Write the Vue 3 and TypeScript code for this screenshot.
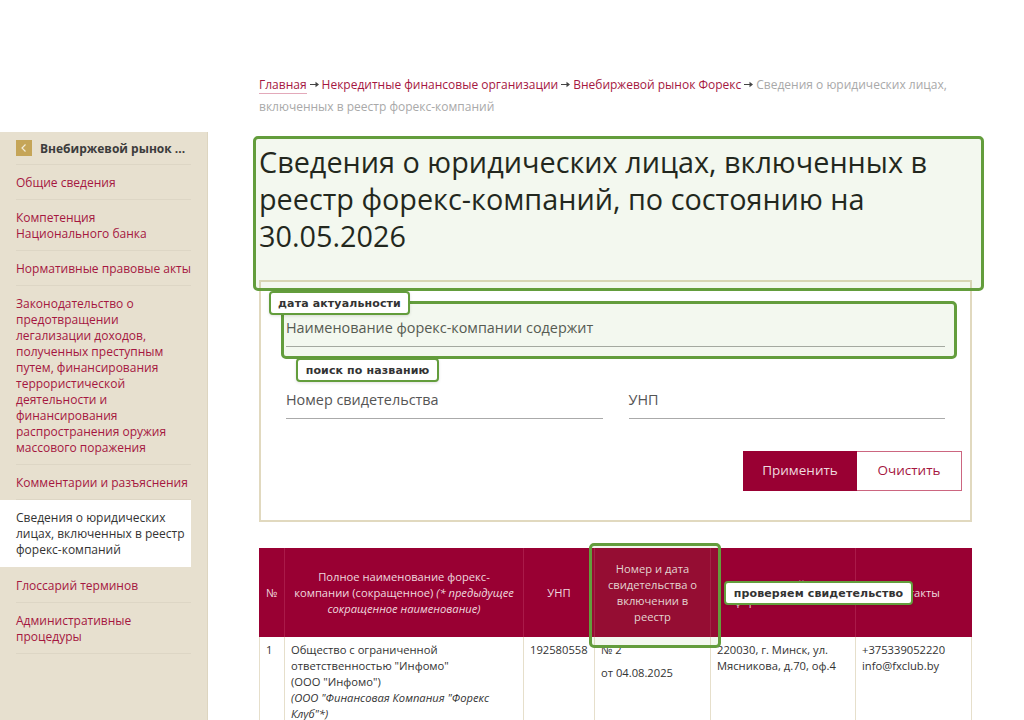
<script setup lang="ts">
interface NavItem { label: string; active?: boolean }
const nav: NavItem[] = [
  { label: 'Общие сведения' },
  { label: 'Компетенция Национального банка' },
  { label: 'Нормативные правовые акты' },
  { label: 'Законодательство о предотвращении легализации доходов, полученных преступным путем, финансирования террористической деятельности и финансирования распространения оружия массового поражения' },
  { label: 'Комментарии и разъяснения' },
  { label: 'Сведения о юридических лицах, включенных в реестр форекс-компаний', active: true },
  { label: 'Глоссарий терминов' },
  { label: 'Административные процедуры' },
]
const crumbs: string[] = ['Главная', 'Некредитные финансовые организации', 'Внебиржевой рынок Форекс']
</script>

<template>
  <div class="page">
    <aside class="side">
      <div class="side-head">
        <span class="back">
          <svg width="16" height="16" viewBox="0 0 16 16"><path d="M9.5 4.5 6 8l3.5 3.5" fill="none" stroke="#f3ecd8" stroke-width="1.2" /></svg>
        </span>
        <span class="side-title">Внебиржевой рынок ...</span>
      </div>
      <a v-for="n in nav" :key="n.label" class="nav" :class="{ active: n.active }">{{ n.label }}</a>
    </aside>

    <main class="main">
      <nav class="crumbs">
        <template v-for="(c, i) in crumbs" :key="c">
          <a :class="{ first: i === 0 }">{{ c }}</a>
          <svg class="arr" width="9" height="7" viewBox="0 0 9 7"><path d="M0 3h5.5V.8L9 3.5 5.5 6.2V4H0z" fill="#444" /></svg>
        </template>
        <span class="cur">Сведения о юридических лицах, включенных в реестр форекс-компаний</span>
      </nav>

      <h1 class="title">Сведения о юридических лицах, включенных в реестр форекс-компаний, по состоянию на 30.05.2026</h1>

      <section class="filter">
        <div class="field wide">Наименование форекс-компании содержит</div>
        <div class="row">
          <div class="field">Номер свидетельства</div>
          <div class="field">УНП</div>
        </div>
        <div class="btns">
          <button class="btn primary">Применить</button>
          <button class="btn ghost">Очистить</button>
        </div>
      </section>

      <table class="tbl">
        <colgroup>
          <col class="c1" /><col class="c2" /><col class="c3" /><col class="c4" /><col class="c5" /><col class="c6" />
        </colgroup>
        <thead>
          <tr>
            <th>№</th>
            <th>Полное наименование форекс-компании (сокращенное) <i>(* предыдущее сокращенное наименование)</i></th>
            <th>УНП</th>
            <th>Номер и дата свидетельства о включении в реестр</th>
            <th>Юридический адрес форекс-компании</th>
            <th>Контакты</th>
          </tr>
        </thead>
        <tbody>
          <tr>
            <td>1</td>
            <td>Общество с ограниченной ответственностью "Инфомо"<br />(ООО "Инфомо")<br /><i>(ООО "Финансовая Компания "Форекс Клуб"*)</i></td>
            <td>192580558</td>
            <td><p class="cert">№ 2</p><p class="cert">от 04.08.2025</p></td>
            <td>220030, г. Минск, ул. Мясникова, д.70, оф.4</td>
            <td>+375339052220<br />info@fxclub.by</td>
          </tr>
        </tbody>
      </table>
    </main>

    <div class="hl hl-title"></div>
    <div class="hl hl-input"></div>
    <div class="hl hl-cert"></div>
    <div class="tag tag-date">дата актуальности</div>
    <div class="tag tag-search">поиск по названию</div>
    <div class="tag tag-cert">проверяем свидетельство</div>
  </div>
</template>

<style>
html, body { margin: 0; background: #fff; }
</style>

<style scoped>
.page {
  position: relative;
  display: flex;
  width: 1024px;
  height: 720px;
  overflow: hidden;
  font-family: "Open Sans", "Noto Sans", sans-serif;
  background: #fff;
  color: #333;
}
.side {
  box-sizing: border-box;
  width: 208px;
  height: 588px;
  margin-top: 132px;
  padding: 0 16px 0 16px;
  background: #e7e0cf;
  border-right: 1px solid #ddd5c0;
  display: flex;
  flex-direction: column;
  flex-shrink: 0;
}
.side-head {
  display: flex;
  align-items: center;
  gap: 8px;
  height: 33px;
  box-sizing: border-box;
  border-bottom: 1px solid #ddd6c5;
}
.back {
  width: 16px;
  height: 16px;
  background: #c5a558;
  display: flex;
}
.side-title { font-size: 12px; font-weight: 700; color: #3c3c3c; white-space: nowrap; }
.nav {
  padding: 10px 0 8px;
  font-size: 12px;
  line-height: 16px;
  color: #a5173f;
  border-bottom: 1px solid #ddd6c5;
}
.nav.active {
  margin-left: -16px;
  padding: 10px 0 9px 16px;
  background: #fff;
  color: #333;
  border-bottom: 0;
}
.nav.active + .nav { padding-top: 11px; }
.main {
  box-sizing: border-box;
  width: 713px;
  margin-left: 51px;
  padding-top: 74px;
  flex-shrink: 0;
}
.crumbs { font-size: 12px; line-height: 22px; color: #a9a9a9; }
.crumbs a { color: #a5173f; }
.crumbs a.first { border-bottom: 1px solid #e3a9ba; }
.arr { vertical-align: 1px; margin: 0 3px; }
.title {
  margin: 25px 0 0;
  font-size: 28.8px;
  line-height: 37px;
  height: 137px;
  font-weight: 400;
  color: #1d1d1d;
}
.filter {
  box-sizing: border-box;
  height: 242px;
  padding: 28px 8px 0 25px;
  border: 2px solid #e1d9bf;
}
.field {
  box-sizing: border-box;
  height: 37px;
  font-size: 14.4px;
  line-height: 36px;
  color: #555;
  border-bottom: 1px solid #aaa;
  flex: 1;
}
.field.wide { margin-right: 17px; }
.row { display: flex; gap: 26px; margin-top: 35px; margin-right: 17px; }
.btns { display: flex; justify-content: flex-end; margin-top: 32px; }
.btn {
  box-sizing: border-box;
  height: 40px;
  font: 400 13.5px "Open Sans", sans-serif;
  padding: 0 0 2px;
}
.primary { width: 114px; background: #990033; color: #eed9df; border: 0; }
.ghost { width: 105px; background: #fff; color: #a5173f; border: 1px solid #cc6680; border-left: 0; }
.tbl {
  margin-top: 26px;
  width: 713px;
  table-layout: fixed;
  border-collapse: separate;
  border-spacing: 0;
  font-size: 11.2px;
  line-height: 16px;
}
.c1 { width: 26px; } .c2 { width: 239px; } .c3 { width: 71px; } .c4 { width: 116px; } .c5 { width: 145px; } .c6 { width: 116px; }
.tbl th {
  height: 89px;
  padding: 0 7px;
  box-sizing: border-box;
  background: #990033;
  color: #eed9df;
  font-weight: 400;
  text-align: center;
  border-right: 1px solid #aa1a49;
}
.tbl th:last-child { border-right: 0; }
.tbl td {
  padding: 5px 6px 6px;
  vertical-align: top;
  color: #333;
  border-right: 1px solid #e6dfcb;
  height: 120px;
}
.tbl td:first-child { border-left: 1px solid #e6dfcb; }
.cert { margin: 0 0 7px; }
.hl {
  position: absolute;
  box-sizing: border-box;
  border: 3px solid #639d3c;
  border-radius: 5px;
  background: rgba(100, 170, 50, 0.08);
}
.hl-title { left: 253px; top: 136px; width: 731px; height: 155px; }
.hl-input { left: 280.5px; top: 301px; width: 676px; height: 57.5px; }
.hl-cert { left: 589px; top: 543px; width: 132px; height: 105px; }
.tag {
  position: absolute;
  box-sizing: border-box;
  height: 24px;
  display: flex;
  align-items: center;
  justify-content: center;
  background: #fff;
  border: 2px solid #639d3c;
  border-radius: 4px;
  box-shadow: 0 1px 3px rgba(0, 0, 0, 0.12);
  font: 700 11px "DejaVu Sans", sans-serif;
  letter-spacing: 0.13px;
  color: #333;
  white-space: nowrap;
}
.tag-date { left: 269px; top: 291px; width: 141px; }
.tag-search { left: 296px; top: 358px; width: 143px; }
.tag-cert { left: 724px; top: 581px; width: 189px; }
</style>
